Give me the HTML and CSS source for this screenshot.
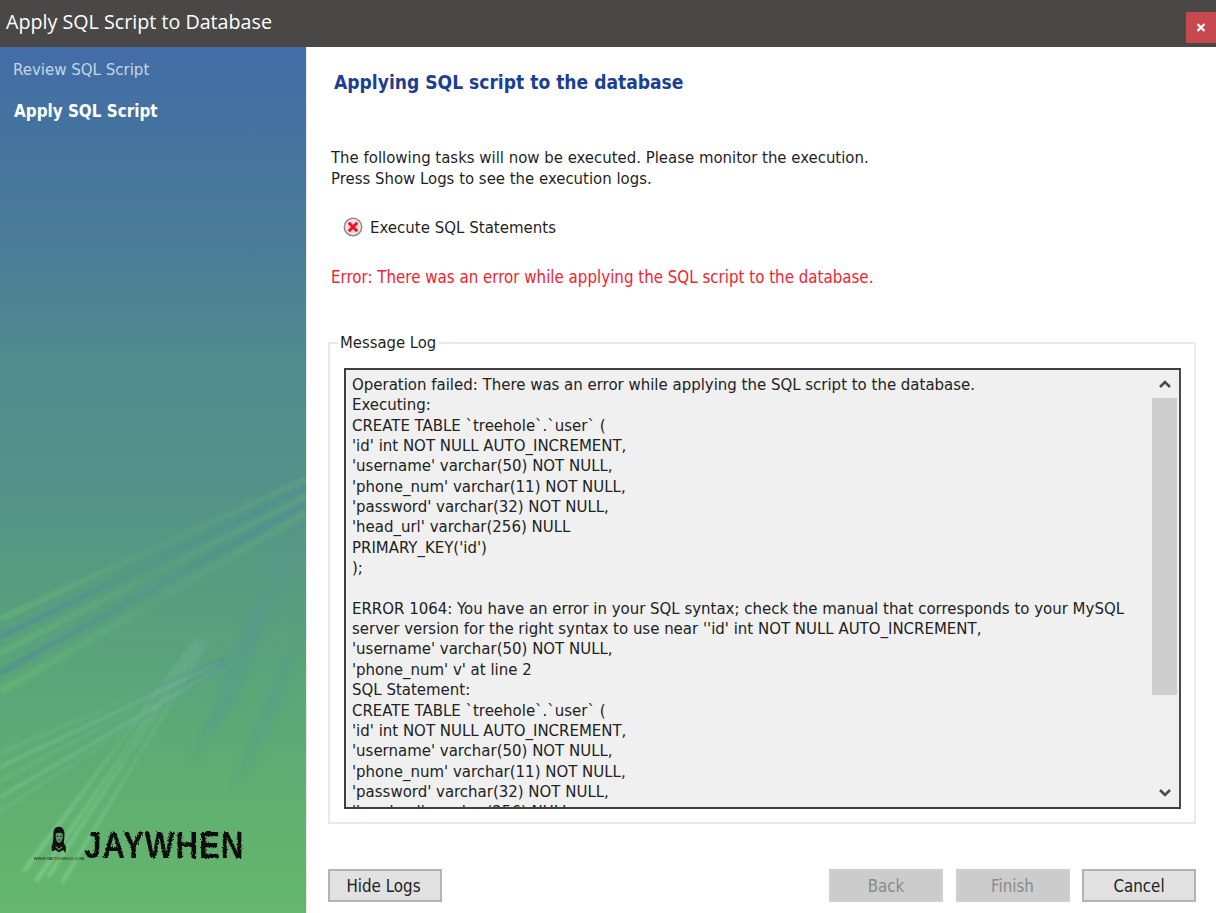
FILE: index.html
```html
<!DOCTYPE html>
<html lang="en">
<head>
<meta charset="utf-8">
<title>Apply SQL Script to Database</title>
<link rel="stylesheet" href="styles.css">
</head>
<body>
<div class="window">
  <header class="titlebar">
    <span class="title">Apply SQL Script to Database</span>
    <button class="close" aria-label="Close"><svg width="10" height="9" viewBox="0 0 10 9"><path d="M1.500 1 8.500 8M8.500 1 1.500 8" stroke="#fff" stroke-width="2.200" fill="none"/></svg></button>
  </header>
  <div class="body">
    <aside class="sidebar">
      <svg class="streaks" width="306" height="866" viewBox="0 0 306 866" aria-hidden="true">
        <defs>
          <filter id="soft" x="-10%" y="-10%" width="120%" height="120%"><feGaussianBlur stdDeviation="1.400"/></filter>
          <filter id="softer" x="-20%" y="-20%" width="140%" height="140%"><feGaussianBlur stdDeviation="4"/></filter>
          <linearGradient id="fadeRight" gradientUnits="userSpaceOnUse" x1="0" y1="0" x2="306" y2="0">
            <stop offset="0" stop-color="#68b878" stop-opacity=".6"/>
            <stop offset=".5" stop-color="#68b878" stop-opacity=".12"/>
            <stop offset="1" stop-color="#68b878" stop-opacity=".3"/>
          </linearGradient>
          <linearGradient id="fadeBlue" gradientUnits="userSpaceOnUse" x1="0" y1="0" x2="306" y2="0">
            <stop offset="0" stop-color="#4f8e96" stop-opacity=".75"/>
            <stop offset=".5" stop-color="#4f8e96" stop-opacity=".3"/>
            <stop offset="1" stop-color="#4f8e96" stop-opacity=".6"/>
          </linearGradient>
          <linearGradient id="pale" gradientUnits="userSpaceOnUse" x1="30" y1="830" x2="200" y2="590">
            <stop offset="0" stop-color="#8ed49a" stop-opacity=".65"/>
            <stop offset=".55" stop-color="#8ed49a" stop-opacity=".14"/>
            <stop offset="1" stop-color="#6fa9a0" stop-opacity=".4"/>
          </linearGradient>
          <linearGradient id="crossBlue" gradientUnits="userSpaceOnUse" x1="0" y1="740" x2="227" y2="610">
            <stop offset="0" stop-color="#7fc48c" stop-opacity=".35"/>
            <stop offset="1" stop-color="#4f8f95" stop-opacity=".7"/>
          </linearGradient>
          <linearGradient id="crossPale" gradientUnits="userSpaceOnUse" x1="0" y1="740" x2="227" y2="610">
            <stop offset="0" stop-color="#8ed49a" stop-opacity=".42"/>
            <stop offset="1" stop-color="#76b49e" stop-opacity=".35"/>
          </linearGradient>
        </defs>
        <g filter="url(#softer)" fill="#55949a" opacity=".35">
          <path d="M292 500 240 650 190 715 238 590Z"/>
          <path d="M306 570 280 660 230 750 262 660Z"/>
        </g>
        <g filter="url(#soft)" fill="none">
          <path d="M306 432 0 572" stroke="url(#fadeRight)" stroke-width="6"/>
          <path d="M306 441 0 590" stroke="url(#fadeBlue)" stroke-width="5"/>
          <path d="M306 449 0 606" stroke="url(#fadeRight)" stroke-width="6"/>
          <path d="M306 457 0 626" stroke="url(#fadeBlue)" stroke-width="6"/>
          <path d="M306 466 0 645" stroke="url(#fadeRight)" stroke-width="8"/>
        </g>
        <g filter="url(#soft)" fill="none">
          <path d="M197 592 24 824" stroke="url(#pale)" stroke-width="4"/>
          <path d="M201 592 36 834" stroke="url(#pale)" stroke-width="4"/>
          <path d="M204 593 48 830" stroke="url(#pale)" stroke-width="4"/>
          <path d="M207 595 62 836" stroke="url(#pale)" stroke-width="3.500"/>
          <path d="M225 611 0 706" stroke="url(#crossBlue)" stroke-width="3"/>
          <path d="M222 615 0 720" stroke="url(#crossPale)" stroke-width="3"/>
          <path d="M226 614 0 734" stroke="url(#crossBlue)" stroke-width="3"/>
          <path d="M224 620 0 750" stroke="url(#crossPale)" stroke-width="3"/>
          <path d="M227 618 0 764" stroke="url(#crossBlue)" stroke-width="2.500"/>
        </g>
      </svg>
      <nav class="steps">
        <div class="step">Review SQL Script</div>
        <div class="step current">Apply SQL Script</div>
      </nav>
      <div class="logo">
        <div class="stamp">
          <svg class="portrait" width="16" height="29" viewBox="0 0 17 29" aria-hidden="true">
            <path d="M8 0C3.500 0 2.500 4 2.500 9 2.500 14 2 18 0.500 21.500L1 26 5 24.500 8 27 13 24.500 15.500 28 16 21.500 13.500 17C14.500 12 14.500 8 14 5 13 1.500 11 0 8 0Z" fill="#111"/>
            <path d="M5 7.500C7 6 10 6 12.500 7.500 13 12 11.500 16.500 8.500 17 6 16.500 4.800 12 5 7.500Z" fill="#5d9b6a"/>
            <path d="M6 10h2M10 10h2M8 14h2" stroke="#111" stroke-width="1" fill="none"/>
            <path d="M5 21 8.500 24 12 21" stroke="#5d9b6a" stroke-width="1.200" fill="none"/>
          </svg>
          <span class="url">WWW.TATTOOWOO.COM</span>
        </div>
        <span class="brand">JAYWHEN</span>
      </div>
      <svg width="0" height="0" class="defs" aria-hidden="true">
        <filter id="rough"><feTurbulence type="fractalNoise" baseFrequency=".55" numOctaves="2" seed="4"/><feDisplacementMap in="SourceGraphic" scale="3.500"/></filter>
      </svg>
    </aside>
    <main class="content">
      <h1 class="heading">Applying SQL script to the database</h1>
      <p class="intro">The following tasks will now be executed. Please monitor the execution.<br>Press Show Logs to see the execution logs.</p>
      <div class="task">
        <svg width="20" height="20" viewBox="0 0 20 20" aria-hidden="true">
          <circle cx="10" cy="10" r="8.700" fill="#fbe6e6" stroke="#8d8d8d" stroke-width="1.500"/>
          <circle cx="10" cy="10" r="6.500" fill="#ffd5d8"/>
          <path d="M5.800 5.800 14.200 14.200M14.200 5.800 5.800 14.200" stroke="#ee1122" stroke-width="3" fill="none"/>
        </svg>
        <span>Execute SQL Statements</span>
      </div>
      <p class="error">Error: There was an error while applying the SQL script to the database.</p>
      <fieldset class="group">
        <legend class="legend">Message Log</legend>
        <div class="log">
          <pre class="log-text">Operation failed: There was an error while applying the SQL script to the database.
Executing:
CREATE TABLE `treehole`.`user` (
'id' int NOT NULL AUTO_INCREMENT,
'username' varchar(50) NOT NULL,
'phone_num' varchar(11) NOT NULL,
'password' varchar(32) NOT NULL,
'head_url' varchar(256) NULL
PRIMARY_KEY('id')
);

ERROR 1064: You have an error in your SQL syntax; check the manual that corresponds to your MySQL
server version for the right syntax to use near ''id' int NOT NULL AUTO_INCREMENT,
'username' varchar(50) NOT NULL,
'phone_num' v' at line 2
SQL Statement:
CREATE TABLE `treehole`.`user` (
'id' int NOT NULL AUTO_INCREMENT,
'username' varchar(50) NOT NULL,
'phone_num' varchar(11) NOT NULL,
'password' varchar(32) NOT NULL,
'head_url' varchar(256) NULL</pre>
          <div class="scrollbar">
            <svg class="arrow" width="14" height="10" viewBox="0 0 14 10" aria-hidden="true"><path d="M2 8 7 3 12 8" stroke="#4a4a4a" stroke-width="2.600" fill="none"/></svg>
            <div class="track"><div class="thumb"></div></div>
            <svg class="arrow" width="14" height="10" viewBox="0 0 14 10" aria-hidden="true"><path d="M2 2 7 7 12 2" stroke="#4a4a4a" stroke-width="2.600" fill="none"/></svg>
          </div>
        </div>
      </fieldset>
      <footer class="actions">
        <button class="btn hide">Hide Logs</button>
        <div class="nav-buttons">
          <button class="btn" disabled>Back</button>
          <button class="btn" disabled>Finish</button>
          <button class="btn">Cancel</button>
        </div>
      </footer>
    </main>
  </div>
</div>
</body>
</html>
```
FILE: styles.css
```css
* { box-sizing: border-box; }
html, body { margin: 0; height: 100%; }
body { font-family: "DejaVu Sans", "Noto Sans", sans-serif; font-stretch: condensed; color: #1f1f1f; overflow: hidden; }
.window { width: 1216px; height: 913px; display: flex; flex-direction: column; background: #fff; }

.titlebar { height: 47px; flex: none; background: #4a4846; display: flex; justify-content: space-between; }
.title { font-family: "Open Sans", sans-serif; font-stretch: normal; font-size: 19.700px; line-height: 44px; color: #fff; padding-left: 6px; }
.close { width: 30px; height: 31px; margin-top: 12px; border: 0; padding: 0; background: #c7484f; display: flex; align-items: center; justify-content: center; }

.body { flex: 1; display: flex; min-height: 0; }
.sidebar { width: 307px; flex: none; border-right: 1px solid #e4ebe6; position: relative; overflow: hidden; background: linear-gradient(180deg, #426da6 0%, #44749f 11.500%, #4a7d97 23%, #4f8a8f 35%, #549288 51%, #5ca777 75%, #65b76b 100%); }
.streaks { position: absolute; left: 0; top: 0; }
.defs { position: absolute; }
.steps { position: relative; display: flex; flex-direction: column; padding: 12px 0 0 13px; gap: 22px; }
.step { font-size: 16.700px; line-height: 20px; color: #c4d6e8; }
.current { font-weight: 700; font-size: 16.900px; color: #fff; padding-left: 1px; }
.logo { position: absolute; left: 34px; top: 779px; display: flex; align-items: flex-end; }
.stamp { width: 50px; display: flex; flex-direction: column; align-items: center; }
.portrait { display: block; margin-bottom: 1px; }
.url { font-family: "Liberation Sans", sans-serif; font-stretch: normal; font-size: 4.200px; line-height: 5px; white-space: nowrap; color: #111; }
.brand { font-family: "Liberation Sans", sans-serif; font-stretch: normal; font-weight: 700; font-size: 37px; line-height: 30px; letter-spacing: 1px; color: #0c0c0c; transform: scaleX(.85); transform-origin: left bottom; filter: url(#rough); }

.content { flex: 1; min-width: 0; display: flex; flex-direction: column; padding: 0 20px 0 21px; }
.heading { margin: 22px 0 0 6px; font-size: 19.070px; line-height: 26px; font-weight: 700; color: #1c3f92; }
.intro { margin: 53px 0 0 3px; font-size: 16.600px; line-height: 20.500px; }
.task { display: flex; align-items: center; gap: 7px; margin: 28px 0 0 15px; font-size: 16.700px; line-height: 20px; }
.error { margin: 30px 0 0 3px; font-size: 16.780px; line-height: 20px; color: #f4232f; }

.group { margin: 46px 0 0; padding: 14px 13px 13px 14px; height: 491px; border: 2px solid #e9e9e9; min-width: 0; }
.legend { margin-left: -6px; padding: 0 3px 0 2px; font-size: 16.500px; line-height: 20px; }
.log { height: 441px; margin-top: 1px; border: 2px solid #3f3f3f; border-right-color: #4a4a4a; background: #f0f0f0; display: flex; overflow: hidden; }
.log-text { flex: 1; min-width: 0; margin: 0; padding: 5px 6px 0 6px; font-family: inherit; font-size: 16.650px; line-height: 20.350px; white-space: pre; overflow: hidden; color: #222; }
.scrollbar { width: 27px; flex: none; display: flex; flex-direction: column; align-items: center; padding: 0 2px 0 0; background: #f0f0f0; }
.arrow { flex: none; margin: 9px 0; }
.track { flex: 1; width: 25px; }
.thumb { height: 297px; background: #cdcdcd; }

.actions { margin-top: 45px; display: flex; justify-content: space-between; }
.nav-buttons { display: flex; gap: 12.500px; }
.btn { width: 114px; height: 33px; padding: 0; border: 2px solid #b3b3b3; background: #e1e1e1; font: inherit; font-stretch: condensed; font-size: 16.800px; color: #222; }
.btn:disabled { background: #cccccc; border-color: #cfcfcf; color: #8a8a8a; }
.hide { padding-right: 3px; }
```
